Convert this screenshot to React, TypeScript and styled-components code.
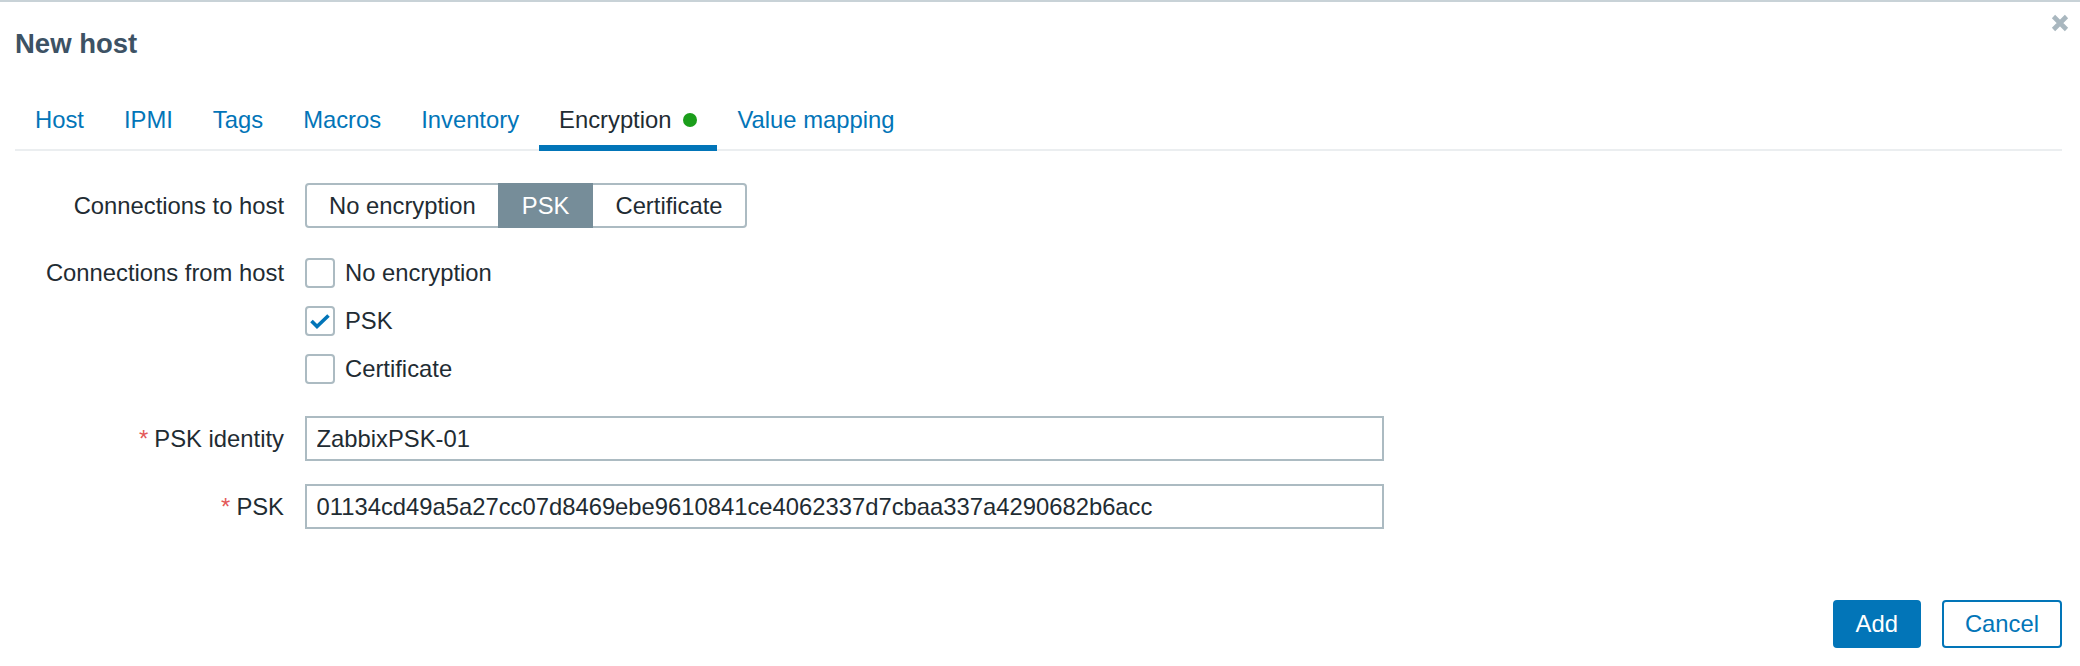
import React from "react";
import styled, { createGlobalStyle } from "styled-components";

const FS = "23.8px";

const GlobalStyle = createGlobalStyle`
  html, body { margin: 0; padding: 0; background: #ffffff; }
  body { font-family: "Liberation Sans", Arial, sans-serif; color: #1f2c33; }
  * { box-sizing: border-box; }
`;

const Page = styled.div`
  position: relative;
  height: 100vh;
  display: flex;
  flex-direction: column;
  border-top: 2px solid #c8d2d7;
  background: #ffffff;
`;

const Header = styled.header`
  padding: 27px 18px 0 15px;
`;

const Title = styled.h4`
  margin: 0;
  font-size: 27.5px;
  line-height: 30px;
  font-weight: bold;
  color: #3d5264;
`;

const CloseButton = styled.button`
  position: absolute;
  top: 12px;
  right: 11px;
  width: 18px;
  height: 18px;
  padding: 0;
  border: 0;
  background: transparent;
  display: flex;
  align-items: center;
  justify-content: center;
`;

const TabStrip = styled.nav`
  margin: 49px 18px 0 15px;
  display: flex;
  border-bottom: 2px solid #ebeef0;
`;

const Tab = styled.a<{ $active?: boolean }>`
  display: flex;
  align-items: center;
  gap: 12px;
  padding: 0 20px 13px;
  margin-bottom: -2px;
  font-size: ${FS};
  line-height: 24px;
  text-decoration: none;
  color: ${(p) => (p.$active ? "#1f2c33" : "#0275b8")};
  border-bottom: 6px solid ${(p) => (p.$active ? "#0275b8" : "transparent")};
`;

const Dot = styled.span`
  width: 14px;
  height: 14px;
  border-radius: 50%;
  background: #1b9e1b;
`;

const FormGrid = styled.form`
  margin: 32px 18px 0 15px;
  display: grid;
  grid-template-columns: 269px 1fr;
  column-gap: 21px;
  row-gap: 23px;
  align-items: start;
`;

const Label = styled.label<{ $h: number; $shift?: number }>`
  text-align: right;
  font-size: ${FS};
  line-height: ${(p) => p.$h}px;
  margin-top: ${(p) => p.$shift ?? 0}px;
  color: #1f2c33;
  white-space: nowrap;
`;

const Required = styled.span`
  color: #e45959;
  margin-right: 6px;
`;

const Segmented = styled.div`
  display: flex;
  height: 45px;
`;

const Segment = styled.span<{ $selected?: boolean; $first?: boolean; $last?: boolean }>`
  position: relative;
  z-index: ${(p) => (p.$selected ? 1 : 0)};
  display: flex;
  align-items: center;
  padding: 0 22px;
  margin-left: ${(p) => (p.$first ? 0 : -2)}px;
  font-size: ${FS};
  border: 2px solid ${(p) => (p.$selected ? "#768d99" : "#acbbc2")};
  background: ${(p) => (p.$selected ? "#768d99" : "#ffffff")};
  color: ${(p) => (p.$selected ? "#ffffff" : "#1f2c33")};
  border-radius: ${(p) =>
    p.$first ? "4px 0 0 4px" : p.$last ? "0 4px 4px 0" : "0"};
`;

const CheckList = styled.ul`
  list-style: none;
  margin: -2px 0 0;
  padding: 0;
`;

const CheckItem = styled.li`
  height: 48px;
  display: flex;
  align-items: center;
  gap: 10px;
  font-size: ${FS};
`;

const Box = styled.span`
  width: 30px;
  height: 30px;
  border: 2px solid #acbbc2;
  border-radius: 4px;
  background: #ffffff;
  display: flex;
  align-items: center;
  justify-content: center;
`;

const TextInput = styled.input`
  width: 1079px;
  height: 45px;
  border: 2px solid #acbbc2;
  border-radius: 0;
  padding: 0 9.5px;
  font-family: "Liberation Sans", Arial, sans-serif;
  font-size: ${FS};
  color: #1f2c33;
  background: #ffffff;
  outline: none;
`;

const Footer = styled.footer`
  margin-top: auto;
  padding: 0 18px 18px 0;
  display: flex;
  justify-content: flex-end;
  gap: 21px;
`;

const Button = styled.button<{ $primary?: boolean }>`
  height: 48px;
  padding: 0 21px;
  border-radius: 4px;
  border: 2px solid #0275b8;
  background: ${(p) => (p.$primary ? "#0275b8" : "#ffffff")};
  color: ${(p) => (p.$primary ? "#ffffff" : "#0275b8")};
  font-family: "Liberation Sans", Arial, sans-serif;
  font-size: ${FS};
  line-height: 1;
  cursor: pointer;
`;

const tabs = ["Host", "IPMI", "Tags", "Macros", "Inventory", "Encryption", "Value mapping"];

const Check = ({ checked }: { checked?: boolean }) => (
  <Box>
    {checked && (
      <svg width="22" height="16" viewBox="0 0 22 16">
        <polyline
          points="2.5,8 8,13.5 19.5,2.5"
          fill="none"
          stroke="#0275b8"
          strokeWidth="3.6"
        />
      </svg>
    )}
  </Box>
);

export default function App() {
  return (
    <>
      <GlobalStyle />
      <Page>
        <Header>
          <Title>New host</Title>
        </Header>
        <CloseButton aria-label="Close">
          <svg width="18" height="18" viewBox="0 0 18 18">
            <path d="M2.5 2.5 L15.5 15.5 M15.5 2.5 L2.5 15.5" stroke="#a9b7bf" strokeWidth="4.6" />
          </svg>
        </CloseButton>
        <TabStrip>
          {tabs.map((t) => (
            <Tab key={t} $active={t === "Encryption"}>
              {t}
              {t === "Encryption" && <Dot />}
            </Tab>
          ))}
        </TabStrip>
        <FormGrid>
          <Label $h={45}>Connections to host</Label>
          <Segmented>
            <Segment $first>No encryption</Segment>
            <Segment $selected>PSK</Segment>
            <Segment $last>Certificate</Segment>
          </Segmented>

          <Label $h={48} $shift={-2}>Connections from host</Label>
          <CheckList>
            <CheckItem>
              <Check />
              No encryption
            </CheckItem>
            <CheckItem>
              <Check checked />
              PSK
            </CheckItem>
            <CheckItem>
              <Check />
              Certificate
            </CheckItem>
          </CheckList>

          <Label $h={45}>
            <Required>*</Required>PSK identity
          </Label>
          <TextInput defaultValue="ZabbixPSK-01" />

          <Label $h={45}>
            <Required>*</Required>PSK
          </Label>
          <TextInput defaultValue="01134cd49a5a27cc07d8469ebe9610841ce4062337d7cbaa337a4290682b6acc" />
        </FormGrid>
        <Footer>
          <Button $primary type="button">Add</Button>
          <Button type="button">Cancel</Button>
        </Footer>
      </Page>
    </>
  );
}
